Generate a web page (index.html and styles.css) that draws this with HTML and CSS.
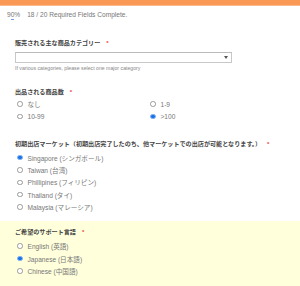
FILE: index.html
```html
<!DOCTYPE html>
<html lang="ja">
<head>
<meta charset="utf-8">
<link rel="stylesheet" href="styles.css">
</head>
<body>
<div class="bar"></div>
<div class="status"><span class="pct">90%<i class="tick"></i></span><span>18 / 20 Required Fields Complete.</span></div>

<section class="q q1">
  <div class="label">販売される主な商品カテゴリー<span class="req">*</span></div>
  <div class="select"><span class="arrow"></span></div>
  <div class="hint">If various categories, please select one major category</div>
</section>

<section class="q q2">
  <div class="label">出品される商品数<span class="req">*</span></div>
  <div class="grid">
    <label class="opt"><input type="radio" name="n">なし</label>
    <label class="opt"><input type="radio" name="n">1-9</label>
    <label class="opt"><input type="radio" name="n">10-99</label>
    <label class="opt"><input type="radio" name="n" checked>&gt;100</label>
  </div>
</section>

<section class="q q3">
  <div class="label">初期出店マーケット（初期出店完了したのち、他マーケットでの出店が可能となります。）<span class="req">*</span></div>
  <div class="list">
    <label class="opt"><input type="radio" name="m" checked>Singapore (シンガポール)</label>
    <label class="opt"><input type="radio" name="m">Taiwan (台湾)</label>
    <label class="opt"><input type="radio" name="m">Phillipines (フィリピン)</label>
    <label class="opt"><input type="radio" name="m">Thailand (タイ)</label>
    <label class="opt"><input type="radio" name="m">Malaysia (マレーシア)</label>
  </div>
</section>

<section class="q q4">
  <div class="label">ご希望のサポート言語<span class="req">*</span></div>
  <div class="list">
    <label class="opt"><input type="radio" name="l">English (英語)</label>
    <label class="opt"><input type="radio" name="l" checked>Japanese (日本語)</label>
    <label class="opt"><input type="radio" name="l">Chinese (中国語)</label>
  </div>
</section>
</body>
</html>
```
FILE: styles.css
```css
html, body {
  margin: 0;
  padding: 0;
  background: #fff;
  font-family: "Liberation Sans", "Noto Sans CJK JP", sans-serif;
  color: #666;
  width: 300px;
  height: 286px;
  overflow: hidden;
}
.bar {
  height: 6px;
  background: #fa9856;
  border-bottom: 1px solid #fbb98b;
  box-sizing: border-box;
}
.status {
  padding: 5px 0 0 7px;
  font-size: 6.6px;
  line-height: 8px;
  color: #777;
  display: flex;
  gap: 7px;
}
.pct {
  position: relative;
}
.tick {
  position: absolute;
  left: 4px;
  top: 8px;
  width: 3px;
  height: 1px;
  background: #6a9fe0;
}
.q {
  padding: 0 15px;
}
.label {
  font-size: 6.1px;
  line-height: 8px;
  font-weight: bold;
  color: #444;
  white-space: nowrap;
}
.req {
  color: #e44;
  margin-left: 6px;
}
.q1 { margin-top: 20px; }
.select {
  margin-top: 5px;
  width: 217px;
  height: 11px;
  box-sizing: border-box;
  border: 1px solid #c8c8c8;
  border-top-color: #bbb;
  background: #fff;
  position: relative;
}
.arrow {
  position: absolute;
  right: 3px;
  top: 3px;
  width: 0;
  height: 0;
  border-left: 2px solid transparent;
  border-right: 2px solid transparent;
  border-top: 3px solid #555;
}
.hint {
  margin-top: 2px;
  font-size: 5.2px;
  line-height: 6px;
  color: #888;
}
.q2 { margin-top: 17px; }
.grid {
  margin-top: 2px;
  display: grid;
  grid-template-columns: 133px 1fr;
}
.opt {
  display: flex;
  align-items: center;
  height: 12.3px;
  font-size: 6.6px;
  color: #777;
  gap: 5px;
  padding-left: 2px;
  white-space: nowrap;
}
.opt input {
  appearance: none;
  -webkit-appearance: none;
  margin: 0;
  width: 5.5px;
  height: 5.5px;
  border: 0.8px solid #999;
  border-radius: 50%;
  box-sizing: border-box;
  background: #fff;
  flex: none;
}
.opt input:checked {
  border-color: #7fb0f5;
  background: #1a73e8;
}
.q3 { margin-top: 17px; }
.q3 .list { margin-top: 4px; }
.q4 {
  margin-top: 8px;
  background: #ffffdc;
  padding-top: 7px;
  padding-bottom: 20px;
}
.q4 .list { margin-top: 4px; }
```
